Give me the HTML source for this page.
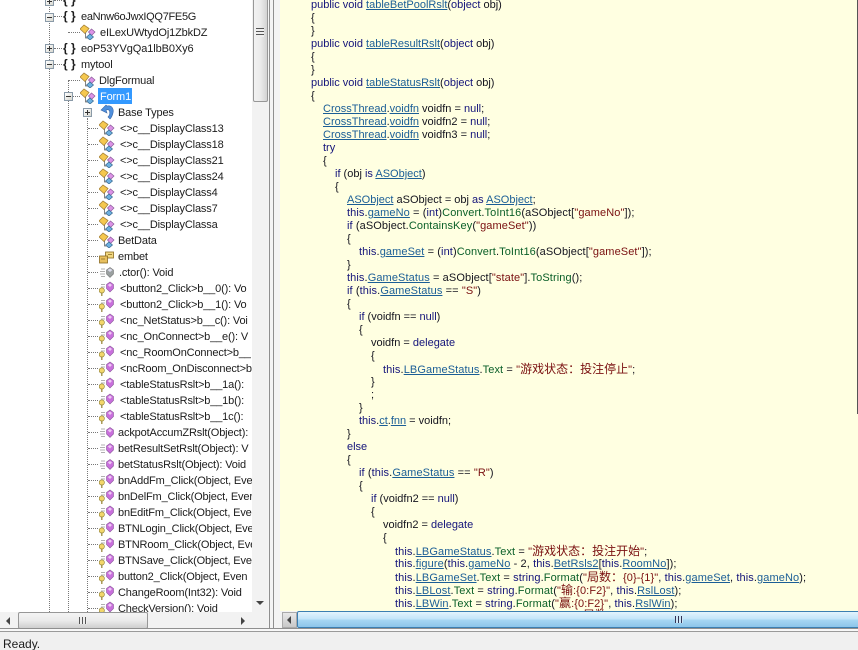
<!DOCTYPE html>
<html><head><meta charset="utf-8"><style>
html,body{margin:0;padding:0;width:858px;height:650px;overflow:hidden;background:#f0f0f0}
body{position:relative;font-family:"Liberation Sans","Noto Sans CJK SC",sans-serif;font-size:11px;color:#111}
#tree{position:absolute;left:0;top:0;width:252px;height:612px;background:#fff;overflow:hidden}
#tree div{position:absolute;white-space:nowrap;height:16px;line-height:16px;letter-spacing:-.15px;color:#1c1c1c;margin-top:1px}
#tree svg{position:absolute;width:16px;height:16px}
.v{position:absolute;width:0;border-left:1px dotted #777}
.h{position:absolute;height:0;border-top:1px dotted #777}
.box{position:absolute;width:9px;height:9px;box-sizing:border-box;border:1px solid #8a9aa8;background:linear-gradient(135deg,#fff,#d8d8d0)}
.box:before{content:"";position:absolute;left:1px;top:3px;width:5px;height:1px;background:#333}
.box.p:after{content:"";position:absolute;left:3px;top:1px;width:1px;height:5px;background:#333}
.ns{font-weight:bold;letter-spacing:0!important;font-size:12px}
#code{position:absolute;left:280px;top:0;width:578px;height:611px;background:#ffffe1;overflow:hidden}
#code p{position:absolute;margin:2px 0 0;height:13px;line-height:13px;white-space:nowrap;color:#14141e;letter-spacing:0}
#code p.w{letter-spacing:.1px}
u{color:#1b5e96;text-decoration:underline}
i{font-style:normal;color:#0a5f28}
b{font-weight:normal;color:#7a1010}
em{font-style:normal;color:#14147a}
var{font-style:normal;font-size:12px;line-height:1;letter-spacing:0}
</style></head><body>
<svg width="0" height="0" style="position:absolute"><defs>
<symbol id="c" viewBox="0 0 16 16"><path d="M0 5 4 1l5 3.500L5 9.500z" fill="#f5c84e" stroke="#a8843a" stroke-width=".8"/><path d="M8.500 8l3-3 3.500 3-3.500 3.500z" fill="#dc93e6" stroke="#8a5a9a" stroke-width=".7"/><path d="M6.500 13l3.500-3 3.500 3-3.500 3z" fill="#6db0e0" stroke="#3a6a90" stroke-width=".7"/><path d="M5.500 9v5h2" fill="none" stroke="#666" stroke-width=".8"/></symbol>
<symbol id="m" viewBox="0 0 16 16"><path d="M1 7.500h5M1 10h5M2 5h4M2 12.500h4" stroke="#b0b0b0" stroke-width=".9"/><path d="M11 3.500l3.500 2.500v4L11 13.500 7.500 10V6z" fill="#c96fdc" stroke="#8a5a9a" stroke-width=".6"/><path d="M8.800 6.500 11 5 13 6.500 11 8.500z" fill="#eec8f4"/></symbol>
<symbol id="k" viewBox="0 0 16 16"><path d="M2 7h4M2 4.500h4" stroke="#b0b0b0" stroke-width=".9"/><path d="M11 2l3.500 2.500v4L11 12 7.500 8.500v-4z" fill="#c96fdc" stroke="#8a5a9a" stroke-width=".6"/><path d="M8.800 5 11 3.500 13 5 11 7z" fill="#eec8f4"/><circle cx="2.800" cy="10.500" r="2.600" fill="#f3d76a" stroke="#9a8a40" stroke-width=".7"/><path d="M2.800 12.500V16.500" stroke="#9a8a40" stroke-width="1.300"/></symbol>
<symbol id="o" viewBox="0 0 16 16"><path d="M1 7.500h5M1 10h5M2 5h4M2 12.500h4" stroke="#b0b0b0" stroke-width=".9"/><path d="M11 3.500l3.500 2.500v4L11 13.500 7.500 10V6z" fill="#9aa0a0" stroke="#777" stroke-width=".6"/><path d="M8.500 6 11 4.500 13.500 6 11 8z" fill="#dde"/></symbol>
<symbol id="s" viewBox="0 0 16 16"><rect x="6.500" y="4" width="8" height="6" fill="#f2d880" stroke="#8a6a20" stroke-width=".8"/><rect x=".5" y="8" width="8" height="7" fill="#e8c060" stroke="#8a6a20" stroke-width=".8"/><path d="M2 11h4M9 6.500h4" stroke="#8a6a20" stroke-width=".8"/></symbol>
<symbol id="b" viewBox="0 0 16 16"><path d="M7 2C12 1 14 5 13 9c-.5 2-1 4-3 6L8 13c2-2 2-4 1.500-6C9 5.500 7.500 5.500 6 6l1 3L1 6l5-5z" fill="#4f8fdc" stroke="#3a68a8" stroke-width=".6"/></symbol>
</defs></svg>

<div id="tree">
<span class="v" style="left:49px;top:0;height:612px"></span>
<span class="v" style="left:68px;top:80px;height:532px"></span>
<span class="v" style="left:87px;top:118px;height:494px"></span>
<span class="h" style="left:54px;top:0;width:8px"></span>
<span class="h" style="left:54px;top:16px;width:8px"></span>
<span class="h" style="left:54px;top:48px;width:8px"></span>
<span class="h" style="left:54px;top:64px;width:8px"></span>
<span class="h" style="left:68px;top:32px;width:12px"></span>
<span class="h" style="left:68px;top:80px;width:12px"></span>
<span class="h" style="left:73px;top:96px;width:7px"></span>
<span class="box p" style="left:45px;top:-3px"></span>
<span class="box" style="left:45px;top:13px"></span>
<span class="box p" style="left:45px;top:44px"></span>
<span class="box" style="left:45px;top:60px"></span>
<span class="box" style="left:64px;top:92px"></span>
<span class="box p" style="left:83px;top:108px"></span>

<div class="ns" style="left:63px;top:-9px">{ }</div>
<div class="ns" style="left:63px;top:7px">{ }</div>
<div style="left:81px;top:8px;letter-spacing:-.3px">eaNnw6oJwxIQQ7FE5G</div>
<svg style="left:80px;top:24px"><use href="#c"/></svg><div style="left:100px;top:24px">eILexUWtydOj1ZbkDZ</div>
<div class="ns" style="left:63px;top:39px">{ }</div>
<div style="left:81px;top:40px;letter-spacing:-.1px">eoP53YVgQa1lbB0Xy6</div>
<div class="ns" style="left:63px;top:55px">{ }</div>
<div style="left:81px;top:56px">mytool</div>
<svg style="left:80px;top:72px"><use href="#c"/></svg><div style="left:99px;top:72px">DlgFormual</div>
<svg style="left:80px;top:88px"><use href="#c"/></svg>
<div style="left:98px;top:88px;margin-top:0;width:34px;background:#3399ff;color:#fff;padding-left:2px;box-sizing:border-box;line-height:18px">Form1</div>
<svg style="left:100px;top:104px"><use href="#b"/></svg><div style="left:118px;top:104px">Base Types</div>

<span class="h" style="left:88px;top:128px;width:10px"></span><svg style="left:99px;top:120px"><use href="#c"/></svg><div style="left:120px;top:120px">&lt;&gt;c__DisplayClass13</div>
<span class="h" style="left:88px;top:144px;width:10px"></span><svg style="left:99px;top:136px"><use href="#c"/></svg><div style="left:120px;top:136px">&lt;&gt;c__DisplayClass18</div>
<span class="h" style="left:88px;top:160px;width:10px"></span><svg style="left:99px;top:152px"><use href="#c"/></svg><div style="left:120px;top:152px">&lt;&gt;c__DisplayClass21</div>
<span class="h" style="left:88px;top:176px;width:10px"></span><svg style="left:99px;top:168px"><use href="#c"/></svg><div style="left:120px;top:168px">&lt;&gt;c__DisplayClass24</div>
<span class="h" style="left:88px;top:192px;width:10px"></span><svg style="left:99px;top:184px"><use href="#c"/></svg><div style="left:120px;top:184px">&lt;&gt;c__DisplayClass4</div>
<span class="h" style="left:88px;top:208px;width:10px"></span><svg style="left:99px;top:200px"><use href="#c"/></svg><div style="left:120px;top:200px">&lt;&gt;c__DisplayClass7</div>
<span class="h" style="left:88px;top:224px;width:10px"></span><svg style="left:99px;top:216px"><use href="#c"/></svg><div style="left:120px;top:216px">&lt;&gt;c__DisplayClassa</div>
<span class="h" style="left:88px;top:240px;width:10px"></span><svg style="left:99px;top:232px"><use href="#c"/></svg><div style="left:118px;top:232px">BetData</div>
<span class="h" style="left:88px;top:256px;width:10px"></span><svg style="left:99px;top:248px"><use href="#s"/></svg><div style="left:118px;top:248px">embet</div>
<span class="h" style="left:88px;top:272px;width:10px"></span><svg style="left:99px;top:264px"><use href="#o"/></svg><div style="left:119px;top:264px">.ctor(): Void</div>
<span class="h" style="left:88px;top:288px;width:10px"></span><svg style="left:99px;top:280px"><use href="#k"/></svg><div style="left:120px;top:280px">&lt;button2_Click&gt;b__0(): Vo</div>
<span class="h" style="left:88px;top:304px;width:10px"></span><svg style="left:99px;top:296px"><use href="#k"/></svg><div style="left:120px;top:296px">&lt;button2_Click&gt;b__1(): Vo</div>
<span class="h" style="left:88px;top:320px;width:10px"></span><svg style="left:99px;top:312px"><use href="#k"/></svg><div style="left:120px;top:312px">&lt;nc_NetStatus&gt;b__c(): Voi</div>
<span class="h" style="left:88px;top:336px;width:10px"></span><svg style="left:99px;top:328px"><use href="#k"/></svg><div style="left:120px;top:328px">&lt;nc_OnConnect&gt;b__e(): V</div>
<span class="h" style="left:88px;top:352px;width:10px"></span><svg style="left:99px;top:344px"><use href="#k"/></svg><div style="left:120px;top:344px">&lt;nc_RoomOnConnect&gt;b__</div>
<span class="h" style="left:88px;top:368px;width:10px"></span><svg style="left:99px;top:360px"><use href="#k"/></svg><div style="left:120px;top:360px">&lt;ncRoom_OnDisconnect&gt;b</div>
<span class="h" style="left:88px;top:384px;width:10px"></span><svg style="left:99px;top:376px"><use href="#k"/></svg><div style="left:120px;top:376px">&lt;tableStatusRslt&gt;b__1a():</div>
<span class="h" style="left:88px;top:400px;width:10px"></span><svg style="left:99px;top:392px"><use href="#k"/></svg><div style="left:120px;top:392px">&lt;tableStatusRslt&gt;b__1b():</div>
<span class="h" style="left:88px;top:416px;width:10px"></span><svg style="left:99px;top:408px"><use href="#k"/></svg><div style="left:120px;top:408px">&lt;tableStatusRslt&gt;b__1c():</div>
<span class="h" style="left:88px;top:432px;width:10px"></span><svg style="left:99px;top:424px"><use href="#m"/></svg><div style="left:118px;top:424px">ackpotAccumZRslt(Object):</div>
<span class="h" style="left:88px;top:448px;width:10px"></span><svg style="left:99px;top:440px"><use href="#m"/></svg><div style="left:118px;top:440px">betResultSetRslt(Object): V</div>
<span class="h" style="left:88px;top:464px;width:10px"></span><svg style="left:99px;top:456px"><use href="#m"/></svg><div style="left:118px;top:456px">betStatusRslt(Object): Void</div>
<span class="h" style="left:88px;top:480px;width:10px"></span><svg style="left:99px;top:472px"><use href="#k"/></svg><div style="left:118px;top:472px">bnAddFm_Click(Object, Eve</div>
<span class="h" style="left:88px;top:496px;width:10px"></span><svg style="left:99px;top:488px"><use href="#k"/></svg><div style="left:118px;top:488px">bnDelFm_Click(Object, Ever</div>
<span class="h" style="left:88px;top:512px;width:10px"></span><svg style="left:99px;top:504px"><use href="#k"/></svg><div style="left:118px;top:504px">bnEditFm_Click(Object, Eve</div>
<span class="h" style="left:88px;top:528px;width:10px"></span><svg style="left:99px;top:520px"><use href="#k"/></svg><div style="left:118px;top:520px">BTNLogin_Click(Object, Eve</div>
<span class="h" style="left:88px;top:544px;width:10px"></span><svg style="left:99px;top:536px"><use href="#k"/></svg><div style="left:118px;top:536px">BTNRoom_Click(Object, Eve</div>
<span class="h" style="left:88px;top:560px;width:10px"></span><svg style="left:99px;top:552px"><use href="#k"/></svg><div style="left:118px;top:552px">BTNSave_Click(Object, Ever</div>
<span class="h" style="left:88px;top:576px;width:10px"></span><svg style="left:99px;top:568px"><use href="#k"/></svg><div style="left:118px;top:568px">button2_Click(Object, Even</div>
<span class="h" style="left:88px;top:592px;width:10px"></span><svg style="left:99px;top:584px"><use href="#k"/></svg><div style="left:118px;top:584px">ChangeRoom(Int32): Void</div>
<span class="h" style="left:88px;top:608px;width:10px"></span><svg style="left:99px;top:600px"><use href="#k"/></svg><div style="left:118px;top:600px">CheckVersion(): Void</div>
</div>

<!-- tree v scrollbar -->
<div style="position:absolute;left:252px;top:0;width:17px;height:612px;background:#f2f2f2"></div>
<div style="position:absolute;left:253px;top:-2px;width:15px;height:104px;box-sizing:border-box;border:1px solid #979797;border-radius:2px;background:linear-gradient(90deg,#f2f2f2,#ebebeb 50%,#d2d2d2)"></div>
<div style="position:absolute;left:256px;top:28px;width:8px;height:9px;background:repeating-linear-gradient(180deg,#555 0 1px,#eee 1px 3px)"></div>
<div style="position:absolute;left:256px;top:601px;width:0;height:0;border-left:4px solid transparent;border-right:4px solid transparent;border-top:4px solid #444"></div>
<!-- tree h scrollbar -->
<div style="position:absolute;left:0;top:612px;width:269px;height:17px;background:#f2f2f2"></div>
<div style="position:absolute;left:18px;top:612px;width:130px;height:17px;box-sizing:border-box;border:1px solid #979797;border-radius:2px;background:linear-gradient(180deg,#f4f4f4,#ebebeb 50%,#cfcfcf)"></div>
<div style="position:absolute;left:79px;top:617px;width:8px;height:7px;background:repeating-linear-gradient(90deg,#555 0 1px,#eee 1px 3px)"></div>
<div style="position:absolute;left:6px;top:617px;width:0;height:0;border-top:4px solid transparent;border-bottom:4px solid transparent;border-right:4px solid #444"></div>
<div style="position:absolute;left:241px;top:617px;width:0;height:0;border-top:4px solid transparent;border-bottom:4px solid transparent;border-left:4px solid #444"></div>
<div style="position:absolute;left:268px;top:0;width:12px;height:630px;background:#f4f4f4"></div>
<div style="position:absolute;left:269px;top:0;width:1px;height:629px;background:#8f8f8f"></div>
<div style="position:absolute;left:273px;top:0;width:1px;height:629px;background:#8f8f8f"></div>

<div id="code">
<p style="left:31px;top:-3px"><em>public void</em> <u>tableBetPoolRslt</u>(<em>object</em> obj)</p>
<p style="left:31px;top:10px">{</p>
<p style="left:31px;top:23px">}</p>
<p style="left:31px;top:36px"><em>public void</em> <u>tableResultRslt</u>(<em>object</em> obj)</p>
<p style="left:31px;top:49px">{</p>
<p style="left:31px;top:62px">}</p>
<p style="left:31px;top:75px"><em>public void</em> <u>tableStatusRslt</u>(<em>object</em> obj)</p>
<p style="left:31px;top:88px">{</p>
<p style="left:43px;top:101px"><u>CrossThread</u>.<u>voidfn</u> voidfn = <em>null</em>;</p>
<p style="left:43px;top:114px"><u>CrossThread</u>.<u>voidfn</u> voidfn2 = <em>null</em>;</p>
<p style="left:43px;top:127px"><u>CrossThread</u>.<u>voidfn</u> voidfn3 = <em>null</em>;</p>
<p style="left:43px;top:140px"><em>try</em></p>
<p style="left:43px;top:153px">{</p>
<p style="left:55px;top:166px"><em>if</em> (obj <em>is</em> <u>ASObject</u>)</p>
<p style="left:55px;top:179px">{</p>
<p style="left:67px;top:192px"><u>ASObject</u> aSObject = obj <em>as</em> <u>ASObject</u>;</p>
<p class="w" style="left:67px;top:205px"><em>this</em>.<u>gameNo</u> = (<em>int</em>)<i>Convert</i>.<i>ToInt16</i>(aSObject[<b>"gameNo"</b>]);</p>
<p class="w" style="left:67px;top:218px"><em>if</em> (aSObject.<i>ContainsKey</i>(<b>"gameSet"</b>))</p>
<p style="left:67px;top:231px">{</p>
<p class="w" style="left:79px;top:244px"><em>this</em>.<u>gameSet</u> = (<em>int</em>)<i>Convert</i>.<i>ToInt16</i>(aSObject[<b>"gameSet"</b>]);</p>
<p style="left:67px;top:257px">}</p>
<p class="w" style="left:67px;top:270px"><em>this</em>.<u>GameStatus</u> = aSObject[<b>"state"</b>].<i>ToString</i>();</p>
<p class="w" style="left:67px;top:283px"><em>if</em> (<em>this</em>.<u>GameStatus</u> == <b>"S"</b>)</p>
<p style="left:67px;top:296px">{</p>
<p style="left:79px;top:309px"><em>if</em> (voidfn == <em>null</em>)</p>
<p style="left:79px;top:322px">{</p>
<p style="left:91px;top:335px">voidfn = <em>delegate</em></p>
<p style="left:91px;top:348px">{</p>
<p class="w" style="left:103px;top:361px"><em>this</em>.<u>LBGameStatus</u>.<i>Text</i> = <b>"<var>游戏状态：投注停止</var>"</b>;</p>
<p style="left:91px;top:374px">}</p>
<p style="left:91px;top:387px">;</p>
<p style="left:79px;top:400px">}</p>
<p style="left:79px;top:413px"><em>this</em>.<u>ct</u>.<u>fnn</u> = voidfn;</p>
<p style="left:67px;top:426px">}</p>
<p style="left:67px;top:439px"><em>else</em></p>
<p style="left:67px;top:452px">{</p>
<p class="w" style="left:79px;top:465px"><em>if</em> (<em>this</em>.<u>GameStatus</u> == <b>"R"</b>)</p>
<p style="left:79px;top:478px">{</p>
<p style="left:91px;top:491px"><em>if</em> (voidfn2 == <em>null</em>)</p>
<p style="left:91px;top:504px">{</p>
<p style="left:103px;top:517px">voidfn2 = <em>delegate</em></p>
<p style="left:103px;top:530px">{</p>
<p class="w" style="left:115px;top:543px"><em>this</em>.<u>LBGameStatus</u>.<i>Text</i> = <b>"<var>游戏状态：投注开始</var>"</b>;</p>
<p class="w" style="left:115px;top:556px"><em>this</em>.<u>figure</u>(<em>this</em>.<u>gameNo</u> - 2, <em>this</em>.<u>BetRsls2</u>[<em>this</em>.<u>RoomNo</u>]);</p>
<p class="w" style="left:115px;top:569px"><em>this</em>.<u>LBGameSet</u>.<i>Text</i> = <em>string</em>.<i>Format</i>(<b>"<var>局数：</var>{0}-{1}"</b>, <em>this</em>.<u>gameSet</u>, <em>this</em>.<u>gameNo</u>);</p>
<p class="w" style="left:115px;top:582px"><em>this</em>.<u>LBLost</u>.<i>Text</i> = <em>string</em>.<i>Format</i>(<b>"<var>输</var>:{0:F2}"</b>, <em>this</em>.<u>RslLost</u>);</p>
<p class="w" style="left:115px;top:595px"><em>this</em>.<u>LBWin</u>.<i>Text</i> = <em>string</em>.<i>Format</i>(<b>"<var>赢</var>:{0:F2}"</b>, <em>this</em>.<u>RslWin</u>);</p>
<p style="left:303px;top:607px"><b><var>局数：</var></b></p>
</div>
<div style="position:absolute;left:857px;top:0;width:1px;height:414px;background:#555"></div>

<!-- code h scrollbar -->
<div style="position:absolute;left:280px;top:611px;width:578px;height:18px;background:#f4f4f4"></div>
<div style="position:absolute;left:282px;top:612px;width:15px;height:16px;box-sizing:border-box;border:1px solid #aaa;background:linear-gradient(180deg,#e8e8e8,#c8c8c8)"></div>
<div style="position:absolute;left:287px;top:616px;width:0;height:0;border-top:4px solid transparent;border-bottom:4px solid transparent;border-right:4px solid #444"></div>
<div style="position:absolute;left:297px;top:611px;width:565px;height:17px;box-sizing:border-box;border:1px solid #3c7fb1;border-radius:2px;background:linear-gradient(180deg,#e3f4fd,#c4e5f9 45%,#a6d6f3 55%,#8cc5ea)"></div>
<div style="position:absolute;left:675px;top:616px;width:8px;height:7px;background:repeating-linear-gradient(90deg,#335 0 1px,#cfe9f8 1px 3px)"></div>

<!-- status bar -->
<div style="position:absolute;left:0;top:628px;width:858px;height:1px;background:#8f8f8f"></div>
<div style="position:absolute;left:0;top:629px;width:858px;height:2px;background:#f8f8f8"></div>
<div style="position:absolute;left:0;top:631px;width:858px;height:1px;background:#9a9a9a"></div>
<div style="position:absolute;left:0;top:632px;width:858px;height:18px;background:#f0f0f0"></div>
<div style="position:absolute;left:3px;top:637px;font-size:12px;line-height:14px;color:#1c1c1c">Ready.</div>
</body></html>
